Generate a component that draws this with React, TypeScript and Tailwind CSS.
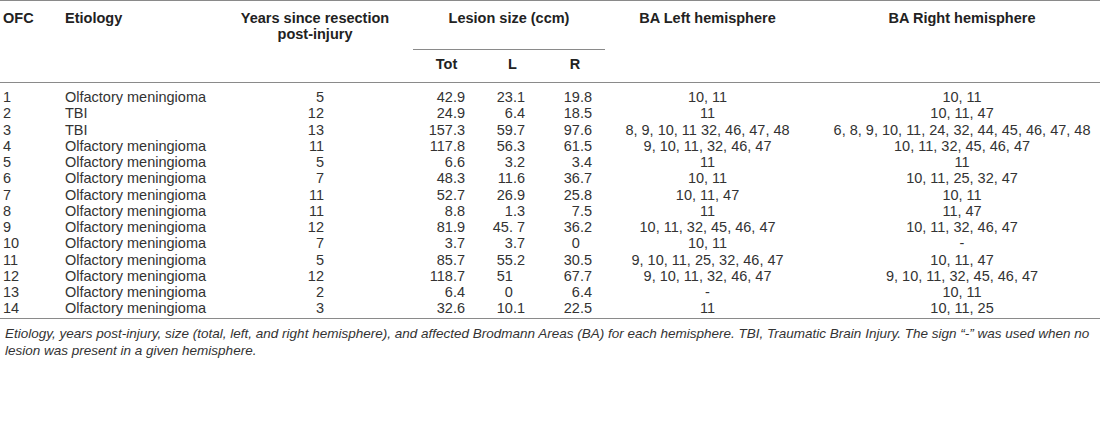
import React from 'react'

// OFC patients: etiology, lesion size and Brodmann areas
const rows = [
  { id: 1, etiology: 'Olfactory meningioma', years: '5', tot: '42.9', l: '23.1', r: '19.8', left: '10, 11', right: '10, 11' },
  { id: 2, etiology: 'TBI', years: '12', tot: '24.9', l: '6.4', r: '18.5', left: '11', right: '10, 11, 47' },
  { id: 3, etiology: 'TBI', years: '13', tot: '157.3', l: '59.7', r: '97.6', left: '8, 9, 10, 11 32, 46, 47, 48', right: '6, 8, 9, 10, 11, 24, 32, 44, 45, 46, 47, 48' },
  { id: 4, etiology: 'Olfactory meningioma', years: '11', tot: '117.8', l: '56.3', r: '61.5', left: '9, 10, 11, 32, 46, 47', right: '10, 11, 32, 45, 46, 47' },
  { id: 5, etiology: 'Olfactory meningioma', years: '5', tot: '6.6', l: '3.2', r: '3.4', left: '11', right: '11' },
  { id: 6, etiology: 'Olfactory meningioma', years: '7', tot: '48.3', l: '11.6', r: '36.7', left: '10, 11', right: '10, 11, 25, 32, 47' },
  { id: 7, etiology: 'Olfactory meningioma', years: '11', tot: '52.7', l: '26.9', r: '25.8', left: '10, 11, 47', right: '10, 11' },
  { id: 8, etiology: 'Olfactory meningioma', years: '11', tot: '8.8', l: '1.3', r: '7.5', left: '11', right: '11, 47' },
  { id: 9, etiology: 'Olfactory meningioma', years: '12', tot: '81.9', l: '45. 7', r: '36.2', left: '10, 11, 32, 45, 46, 47', right: '10, 11, 32, 46, 47' },
  { id: 10, etiology: 'Olfactory meningioma', years: '7', tot: '3.7', l: '3.7', r: '0', left: '10, 11', right: '-' },
  { id: 11, etiology: 'Olfactory meningioma', years: '5', tot: '85.7', l: '55.2', r: '30.5', left: '9, 10, 11, 25, 32, 46, 47', right: '10, 11, 47' },
  { id: 12, etiology: 'Olfactory meningioma', years: '12', tot: '118.7', l: '51', r: '67.7', left: '9, 10, 11, 32, 46, 47', right: '9, 10, 11, 32, 45, 46, 47' },
  { id: 13, etiology: 'Olfactory meningioma', years: '2', tot: '6.4', l: '0', r: '6.4', left: '-', right: '10, 11' },
  { id: 14, etiology: 'Olfactory meningioma', years: '3', tot: '32.6', l: '10.1', r: '22.5', left: '11', right: '10, 11, 25' },
]

// keeps integers lined up on the decimal point
function Num({ v }: { v: string }) {
  if (v.includes('.')) return <>{v}</>
  return (
    <>
      {v}
      <span className="invisible">.0</span>
    </>
  )
}

export default function App() {
  const last = rows.length - 1

  return (
    <div className="w-[1100px] h-[425px] bg-white text-[#333] font-['Liberation_Sans',Arial,sans-serif] text-[14.5px] overflow-hidden">
      <table className="w-[1100px] table-fixed border-collapse">
        <colgroup>
          <col className="w-[60px]" />
          <col className="w-[180px]" />
          <col className="w-[150px]" />
          <col className="w-[23px]" />
          <col className="w-[67px]" />
          <col className="w-[65px]" />
          <col className="w-[60px]" />
          <col className="w-[205px]" />
          <col className="w-[290px]" />
        </colgroup>
        <thead className="text-[#222] font-bold leading-[16px]">
          <tr className="border-t border-[#8a8a8a]">
            <th rowSpan={2} className="text-left align-top pl-[3px] pt-[9px]">OFC</th>
            <th rowSpan={2} className="text-left align-top pl-[5px] pt-[9px]">Etiology</th>
            <th rowSpan={2} className="text-center align-top pt-[9px] whitespace-nowrap">
              Years since resection
              <br />
              post-injury
            </th>
            <th rowSpan={2} />
            <th colSpan={3} className="text-center align-top pt-[9px] pb-[23px] border-b border-[#8a8a8a]">
              Lesion size (ccm)
            </th>
            <th rowSpan={2} className="text-center align-top pt-[9px]">BA Left hemisphere</th>
            <th rowSpan={2} className="text-center align-top pt-[9px] pl-[14px]">BA Right hemisphere</th>
          </tr>
          <tr className="border-b border-[#8a8a8a]">
            <th className="text-center pt-[6px] pb-[10px]">Tot</th>
            <th className="text-center pt-[6px] pb-[10px]">L</th>
            <th className="text-center pt-[6px] pb-[10px]">R</th>
          </tr>
        </thead>
        <tbody className="leading-[16.25px]">
          {rows.map((row, i) => {
            const pad = i === 0 ? 'pt-[6px]' : i === last ? 'pb-[1px]' : ''
            return (
              <tr key={row.id} className={i === last ? 'border-b border-[#8a8a8a]' : ''}>
                <td className={`pl-[3px] ${pad}`}>{row.id}</td>
                <td className={`pl-[5px] whitespace-nowrap ${pad}`}>{row.etiology}</td>
                <td className={`text-right pr-[66px] ${pad}`}>{row.years}</td>
                <td className={pad} />
                <td className={`text-right pr-[15px] ${pad}`}><Num v={row.tot} /></td>
                <td className={`text-right pr-[20px] ${pad}`}><Num v={row.l} /></td>
                <td className={`text-right pr-[13px] ${pad}`}><Num v={row.r} /></td>
                <td className={`text-center whitespace-nowrap ${pad}`}>{row.left}</td>
                <td className={`text-center whitespace-nowrap pl-[14px] ${pad}`}>{row.right}</td>
              </tr>
            )
          })}
        </tbody>
      </table>
      <p className="italic text-[13.5px] leading-[17px] text-[#333] px-[5px] pt-[6px]">
        Etiology, years post-injury, size (total, left, and right hemisphere), and affected Brodmann Areas (BA) for each
        hemisphere. TBI, Traumatic Brain Injury. The sign “-” was used when no lesion was present in a given hemisphere.
      </p>
    </div>
  )
}
